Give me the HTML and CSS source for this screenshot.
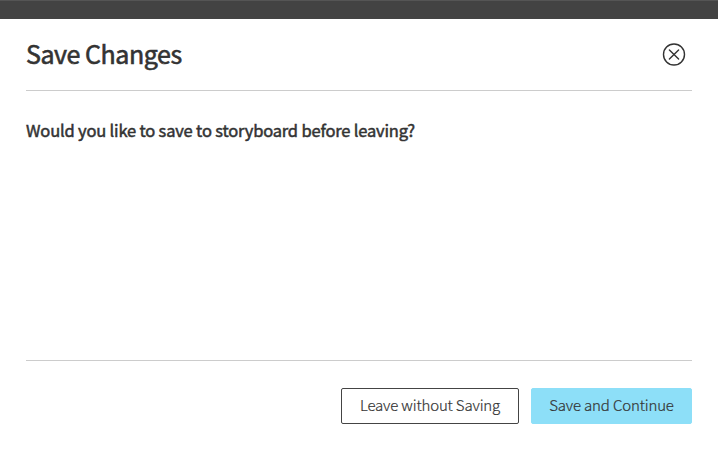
FILE: index.html
```html
<!DOCTYPE html>
<html lang="en">
<head>
<meta charset="utf-8">
<title>Save Changes</title>
<link rel="stylesheet" href="styles.css">
</head>
<body>
<div class="backdrop"></div>
<main class="dialog">
  <header class="header">
    <h1 class="title">Save Changes</h1>
    <button class="close" aria-label="Close">
      <svg width="24" height="24" viewBox="0 0 24 24" fill="none" stroke="#333" stroke-width="1.4" stroke-linecap="round">
        <circle cx="12" cy="11.5" r="10.5"/>
        <path d="M7.4 6.9l9.2 9.2M16.6 6.9l-9.2 9.2"/>
      </svg>
    </button>
  </header>
  <section class="content"><p class="message">Would you like to save to storyboard before leaving?</p></section>
  <footer class="footer">
    <button class="button leave">Leave without Saving</button>
    <button class="button save">Save and Continue</button>
  </footer>
</main>
</body>
</html>
```
FILE: styles.css
```css
* { box-sizing: border-box; }
body {
  margin: 0;
  height: 450px;
  overflow: hidden;
  display: flex;
  flex-direction: column;
  background: #fff;
  color: #333;
  font-family: "Noto Sans CJK SC", "Open Sans", sans-serif;
}
.backdrop { height: 19px; flex: none; background: #434343; border-top: 1px solid #555; }
.dialog { flex: 1; display: flex; flex-direction: column; padding: 0 26px 26px; }
.header {
  height: 72px;
  display: flex;
  align-items: center;
  justify-content: space-between;
  border-bottom: 1px solid #ccc;
}
.title {
  margin: 0;
  padding-bottom: 3px;
  font-size: 25px;
  font-weight: 400;
  line-height: 36px;
  letter-spacing: -0.45px;
  -webkit-text-stroke: 0.6px #333;
}
.close { display: flex; margin: 0 6px 0 0; padding: 0; border: 0; background: none; }
.content { height: 269px; padding-top: 27px; }
.message {
  margin: 0;
  font-size: 16.5px;
  line-height: 24px;
  letter-spacing: -0.18px;
  -webkit-text-stroke: 0.5px #333;
}
.footer {
  display: flex;
  justify-content: flex-end;
  gap: 12px;
  padding-top: 27px;
  border-top: 1px solid #ccc;
}
.button {
  height: 36px;
  padding: 0 0 2px;
  border: 1px solid #444;
  border-radius: 2px;
  background: #fff;
  color: #333;
  font-family: inherit;
  font-size: 15px;
  font-weight: 300;
  line-height: 20px;
  letter-spacing: -0.16px;
  -webkit-text-stroke: 0.2px #333;
  white-space: nowrap;
}
.leave { width: 178px; }
.save { width: 161px; border-color: #8ddff8; background: #8ddff8; }
```
